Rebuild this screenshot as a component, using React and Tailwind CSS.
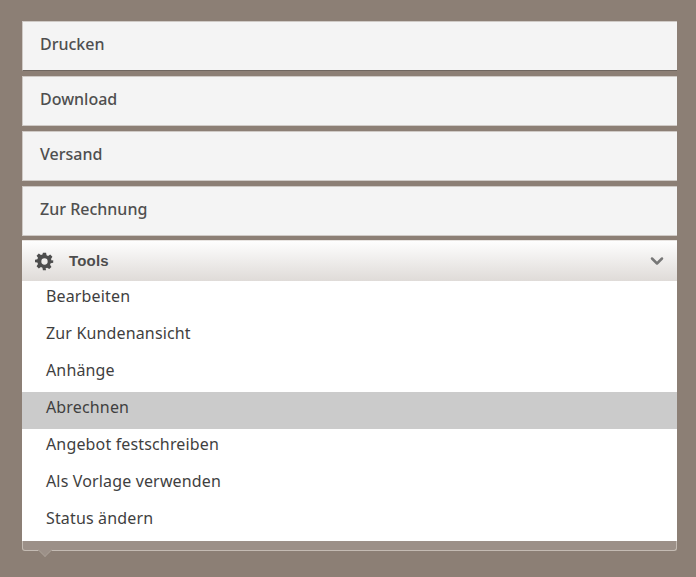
import React from 'react';
import { ChevronDown } from 'lucide-react';

const actions = ['Drucken', 'Download', 'Versand', 'Zur Rechnung'];
const tools = [
  'Bearbeiten',
  'Zur Kundenansicht',
  'Anhänge',
  'Abrechnen',
  'Angebot festschreiben',
  'Als Vorlage verwenden',
  'Status ändern',
];

const Gear = () => (
  <svg viewBox="0 0 24 24" className="w-[19px] h-[19px]" fill="#4d4d4d">
    <path
      fillRule="evenodd"
      d="M10 1h4l.6 3.2 1.900.8 2.700-1.800 2.800 2.800-1.800 2.700.8 1.900L23 10.400v3.200l-3.200.6-.8 1.900 1.800 2.700-2.800 2.800-2.700-1.800-1.900.8L14 23h-4l-.6-3.200-1.900-.8-2.700 1.800L2 18l1.800-2.700-.8-1.900L0 12.800v-3l3-.6.800-1.900L2 4.800 4.800 2l2.700 1.800 1.900-.8L10 1zm2 7a4 4 0 1 0 0 8 4 4 0 0 0 0-8z"
    />
  </svg>
);

export default function App() {
  return (
    <div className="min-h-[577px] bg-[#8c7f75] pt-[21px] px-[22px] font-['Noto_Sans',sans-serif] overflow-hidden">
      <div className="w-[655px] flex flex-col">
        {actions.map((label, i) => (
          <button
            key={label}
            className={`h-[50px] pl-[17px] pb-[5px] flex items-center text-left bg-[#f4f4f4] border-t border-b border-l border-[#cfcac6] text-[16px] font-medium text-[#4f4f4f] ${i === 0 ? 'border-b-[#6f665f]' : ''} ${i === 3 ? 'mb-[4px]' : 'mb-[5px]'}`}
          >
            {label}
          </button>
        ))}

        <div className="h-[41px] flex items-center justify-between pl-[13px] pr-[10px] border-t border-[#e8e4e1] bg-gradient-to-b from-[#fefefe] to-[#dfdbd8]">
          <div className="flex items-center gap-[15px]">
            <Gear />
            <span className="font-['Liberation_Sans',sans-serif] font-bold text-[15px] tracking-[0.2px] text-[#4d4d4d]">Tools</span>
          </div>
          <ChevronDown className="w-[20px] h-[20px] text-[#777777]" strokeWidth={3} />
        </div>

        <ul className="bg-white pb-[1px]">
          {tools.map((label) => (
            <li
              key={label}
              className={`h-[37px] pl-[24px] pb-[7px] flex items-center text-[16px] tracking-[0.15px] text-[#3f3f3f] ${label === 'Abrechnen' ? 'bg-[#cbcbcb]' : ''}`}
            >
              {label}
            </li>
          ))}
        </ul>

        {/* footer strip with the little pointer */}
        <div className="relative h-[10px] bg-[#9c9088] border-b border-x border-[#c4bbb3] rounded-b-[3px]">
          <div className="absolute left-[17px] top-[4px] w-[10px] h-[10px] rotate-45 bg-[#9c9088] border-b border-r border-[#a59a91]" />
        </div>
      </div>
    </div>
  );
}
